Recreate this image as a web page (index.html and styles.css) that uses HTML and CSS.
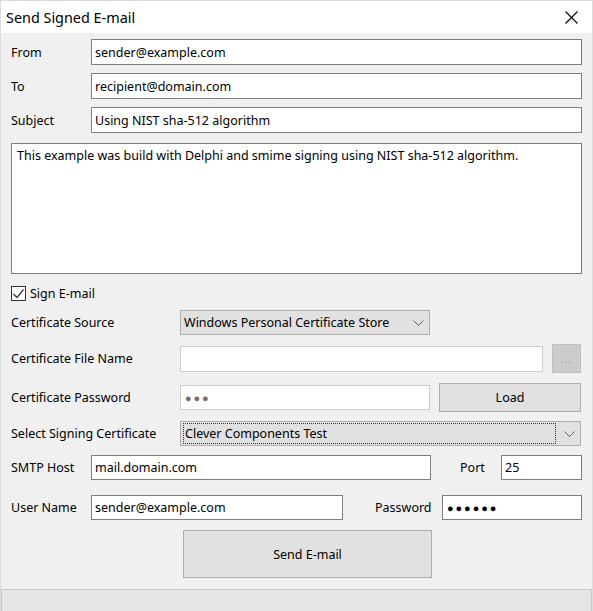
FILE: index.html
```html
<!DOCTYPE html>
<html>
<head>
<meta charset="utf-8">
<title>Send Signed E-mail</title>
<link rel="stylesheet" href="styles.css">
</head>
<body>
<div class="window">
  <div class="titlebar">
    <span class="title">Send Signed E-mail</span>
    <svg class="close" width="13" height="13" viewBox="0 0 13 13"><path d="M0.5 0.5 L12.5 12.5 M12.5 0.5 L0.5 12.5" stroke="#000" stroke-width="1.1" fill="none"/></svg>
  </div>
  <div class="content">
    <div class="row r-from">
      <label class="lbl lbl-short">From</label>
      <input class="edit grow" type="text" value="sender@example.com" readonly>
    </div>
    <div class="row r-to">
      <label class="lbl lbl-short">To</label>
      <input class="edit grow" type="text" value="recipient@domain.com" readonly>
    </div>
    <div class="row r-subject">
      <label class="lbl lbl-short">Subject</label>
      <input class="edit grow" type="text" value="Using NIST sha-512 algorithm" readonly>
    </div>
    <textarea class="memo" readonly>This example was build with Delphi and smime signing using NIST sha-512 algorithm.</textarea>
    <div class="row r-sign">
      <span class="check"><svg width="13" height="12" viewBox="0 0 13 12"><path d="M1.5 6 L5 9.5 L11.5 1.5" stroke="#333" stroke-width="1.2" fill="none"/></svg></span>
      <span class="check-lbl">Sign E-mail</span>
    </div>
    <div class="row r-source">
      <label class="lbl lbl-long">Certificate Source</label>
      <div class="combo combo-source">
        <span class="combo-text">Windows Personal Certificate Store</span>
        <svg class="chev" width="11" height="6" viewBox="0 0 11 6"><path d="M0.5 0.5 L5.5 5.5 L10.5 0.5" stroke="#606060" stroke-width="1" fill="none"/></svg>
      </div>
    </div>
    <div class="row r-file">
      <label class="lbl lbl-long">Certificate File Name</label>
      <input class="edit flat file-edit" type="text" value="" readonly>
      <div class="btn-dots">...</div>
    </div>
    <div class="row r-pass">
      <label class="lbl lbl-long">Certificate Password</label>
      <div class="edit flat pass-edit"><span class="dots gray">●●●</span></div>
      <div class="btn btn-load">Load</div>
    </div>
    <div class="row r-select">
      <label class="lbl lbl-long">Select Signing Certificate</label>
      <div class="combo combo-select">
        <span class="focus-rect"><span class="combo-text">Clever Components Test</span></span>
        <svg class="chev" width="11" height="6" viewBox="0 0 11 6"><path d="M0.5 0.5 L5.5 5.5 L10.5 0.5" stroke="#606060" stroke-width="1" fill="none"/></svg>
      </div>
    </div>
    <div class="row r-smtp">
      <label class="lbl lbl-short">SMTP Host</label>
      <input class="edit host-edit" type="text" value="mail.domain.com" readonly>
      <label class="lbl-port">Port</label>
      <input class="edit port-edit" type="text" value="25" readonly>
    </div>
    <div class="row r-user">
      <label class="lbl lbl-short">User Name</label>
      <input class="edit user-edit" type="text" value="sender@example.com" readonly>
      <label class="lbl-pwd">Password</label>
      <div class="edit pwd-edit"><span class="dots">●●●●●●</span></div>
    </div>
    <div class="row r-send">
      <div class="btn btn-send">Send E-mail</div>
    </div>
    <div class="statusbar"></div>
  </div>
</div>
</body>
</html>
```
FILE: styles.css
```css
* { box-sizing: border-box; }
html, body { margin: 0; padding: 0; background: #f0f0f0; }
body { font-family: "Noto Sans", "Open Sans", sans-serif; font-size: 12.5px; color: #000; }

.window {
  width: 593px;
  height: 611px;
  border: 1px solid #dcdcdc;
  border-bottom: none;
  background: #f0f0f0;
  display: flex;
  flex-direction: column;
  overflow: hidden;
}

.titlebar {
  height: 32px;
  background: #fff;
  display: flex;
  align-items: center;
  justify-content: space-between;
  padding: 0 14px 0 5px;
  flex: none;
}
.title { font-size: 14.4px; color: #000; }
.close { display: block; }

.content {
  flex: 1;
  display: flex;
  flex-direction: column;
  padding: 6px 10px 0 10px;
}

.row { display: flex; align-items: center; flex: none; }
.lbl { display: block; flex: none; }
.lbl-short { width: 80px; }
.lbl-long { width: 169px; }

.edit {
  display: block;
  height: 26px;
  border: 1px solid #7f7f7f;
  background: #fff;
  font: inherit;
  color: #000;
  padding: 0 3px;
  margin: 0;
  outline: none;
  border-radius: 0;
}
.edit.flat { border-color: #cdcdcd; }
.grow { flex: 1; }

.r-from { height: 26px; }
.r-to { height: 26px; margin-top: 8px; }
.r-subject { height: 26px; margin-top: 8px; }

.memo {
  display: block;
  flex: none;
  margin: 10px 0 0 0;
  height: 131px;
  width: 571px;
  border: 1px solid #7f7f7f;
  background: #fff;
  font: inherit;
  padding: 3px 5px;
  resize: none;
  outline: none;
  color: #000;
  line-height: 17px;
}

.r-sign { height: 17px; margin-top: 11px; }
.check {
  width: 15px; height: 15px;
  border: 1px solid #333;
  background: #fff;
  display: flex; align-items: center; justify-content: center;
  margin-right: 4px;
  flex: none;
}
.check svg { display: block; }

.combo {
  height: 25px;
  background: #e1e1e1;
  border: 1px solid #adadad;
  display: flex;
  align-items: center;
  justify-content: space-between;
  padding: 0 5px 0 3px;
  flex: none;
}
.combo-text { white-space: nowrap; }
.chev { display: block; flex: none; }

.r-source { height: 25px; margin-top: 8px; }
.combo-source { width: 250px; }

.r-file { height: 29px; margin-top: 9px; }
.file-edit { width: 363px; height: 26px; }
.btn-dots {
  width: 29px; height: 29px;
  margin-left: 9px;
  background: #cccccc;
  border: 1px solid #bfbfbf;
  color: #9a9a9a;
  font-size: 10px;
  display: flex; align-items: center; justify-content: center;
  letter-spacing: 1px;
  flex: none;
}

.r-pass { height: 29px; margin-top: 10px; }
.pass-edit { width: 250px; height: 25px; display: flex; align-items: center; padding-left: 4px; }
.dots { font-size: 11px; letter-spacing: 1.9px; }
.dots.gray { color: #707070; }
.btn {
  background: #e1e1e1;
  border: 1px solid #adadad;
  display: flex; align-items: center; justify-content: center;
  flex: none;
}
.btn-load { width: 142px; height: 29px; margin-left: 9px; }

.r-select { height: 25px; margin-top: 9px; }
.combo-select { width: 401px; padding: 0 5px 0 2px; }
.focus-rect {
  border: 1px dotted #333;
  height: 21px;
  width: 373px;
  display: flex; align-items: center;
  padding-left: 1px;
}

.r-smtp { height: 25px; margin-top: 9px; }
.host-edit { width: 340px; height: 25px; }
.lbl-port { width: 70px; padding-left: 29px; flex: none; }
.port-edit { width: 81px; height: 25px; }

.r-user { height: 25px; margin-top: 15px; }
.user-edit { width: 252px; height: 25px; }
.lbl-pwd { width: 99px; padding-left: 32px; flex: none; }
.pwd-edit { width: 140px; height: 25px; display: flex; align-items: center; padding-left: 4px; }

.r-send { height: 48px; margin-top: 10px; padding-left: 172px; }
.btn-send { width: 249px; height: 48px; }

.statusbar {
  flex: none;
  margin: 11px -10px 0 -10px;
  height: 22px;
  background: #e6e6e6;
  border: 1px solid #c8c8c8;
  border-bottom: none;
}
```
